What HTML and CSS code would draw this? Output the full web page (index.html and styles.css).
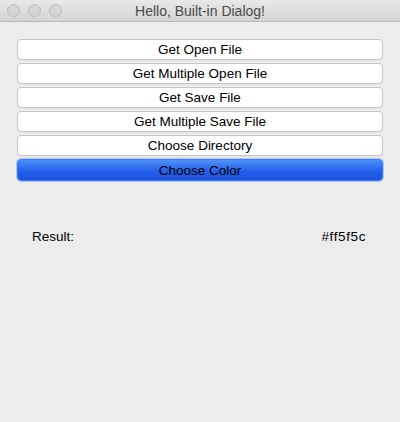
FILE: index.html
```html
<!DOCTYPE html>
<html>
<head>
<meta charset="utf-8">
<link rel="stylesheet" href="styles.css">
</head>
<body>
<div class="window">
  <div class="titlebar">
    <div class="lights">
      <span class="light"></span>
      <span class="light"></span>
      <span class="light"></span>
    </div>
    <div class="title">Hello, Built-in Dialog!</div>
  </div>
  <div class="content">
    <div class="buttons">
      <button class="btn">Get Open File</button>
      <button class="btn">Get Multiple Open File</button>
      <button class="btn">Get Save File</button>
      <button class="btn">Get Multiple Save File</button>
      <button class="btn">Choose Directory</button>
      <button class="btn primary">Choose Color</button>
    </div>
    <div class="result">
      <span>Result:</span>
      <span class="value">#ff5f5c</span>
    </div>
  </div>
</div>
</body>
</html>
```
FILE: styles.css
```css
html, body {
  margin: 0;
  padding: 0;
  background: #ececec;
}
.window {
  width: 400px;
  height: 422px;
  background: #ececec;
  font-family: "Liberation Sans", Arial, sans-serif;
  font-size: 13.5px;
  color: #000;
  border-radius: 0 0 5px 5px;
  overflow: hidden;
  position: relative;
}
.titlebar {
  height: 21px;
  border-bottom: 1px solid #b9b9b9;
  background: linear-gradient(#e9e9e9, #d3d3d3);
  display: flex;
  align-items: center;
  justify-content: center;
  position: relative;
}
.lights {
  position: absolute;
  left: 7px;
  top: 4px;
  display: flex;
  gap: 8px;
}
.light {
  width: 11px;
  height: 11px;
  border-radius: 50%;
  border: 0.5px solid #bdbdbd;
  background: #d6d6d6;
}
.title {
  font-size: 14px;
  color: #4a4a4a;
  padding-top: 1px;
}
.content {
  padding: 17px 17px 0 17px;
}
.buttons {
  display: flex;
  flex-direction: column;
  gap: 3px;
}
.btn {
  height: 21px;
  margin: 0;
  padding: 0;
  border: 1px solid #c6c6c6;
  border-radius: 4px;
  background: #fff;
  font-family: "Liberation Sans", Arial, sans-serif;
  font-size: 13.5px;
  color: #000;
  box-shadow: 0 0.5px 0.5px rgba(0,0,0,0.08);
}
.btn.primary {
  border: 1px solid #3b80f5;
  background: linear-gradient(#4f92fb, #2560e9 55%, #1d52e0);
  box-shadow: 0 0 0 1px rgba(110,160,240,0.5);
  height: 22px;
  color: #000;
}
.result {
  display: flex;
  justify-content: space-between;
  padding: 48px 17px 0 15px;
}
.value {
  letter-spacing: 0.6px;
}
```
